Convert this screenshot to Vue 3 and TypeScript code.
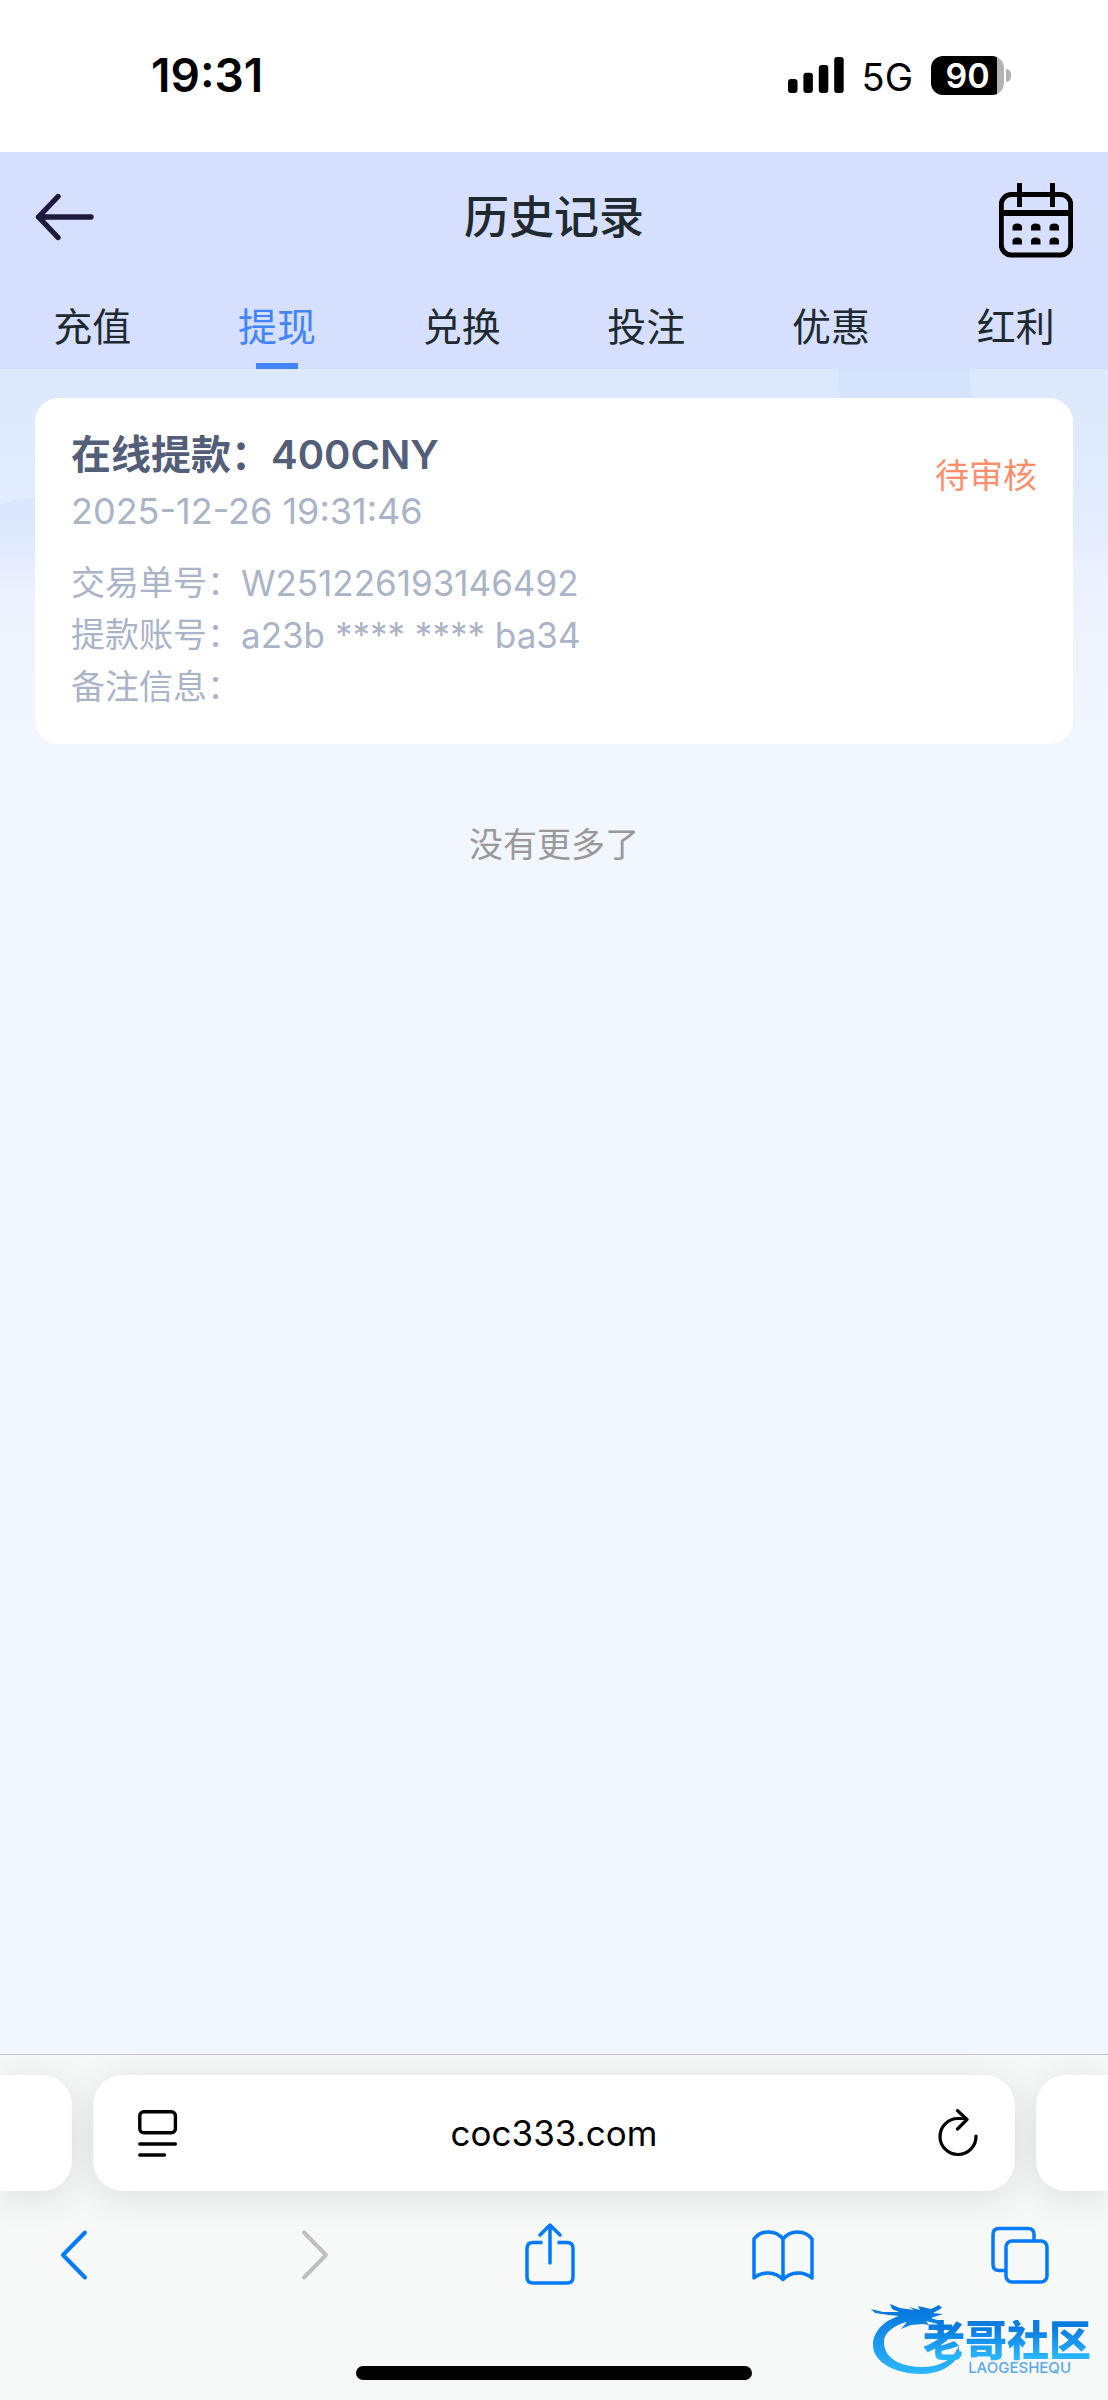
<script setup lang="ts">
import { ref } from 'vue'

interface Row {
  label: string
  value: string
}

const tabs: string[] = ['充值', '提现', '兑换', '投注', '优惠', '红利']
const active = ref<number>(1)
const address = ref<string>('coc333.com')
const rows: Row[] = [
  { label: '交易单号：', value: 'W251226193146492' },
  { label: '提款账号：', value: 'a23b **** **** ba34' },
  { label: '备注信息：', value: '' },
]
</script>

<template>
  <div class="screen">
    <div class="status">
      <span class="time">19:31</span>
      <div class="signals">
        <svg class="bars" width="56" height="36" viewBox="0 0 56 36" aria-hidden="true">
          <rect x="0" y="22" width="9.5" height="14" rx="3" />
          <rect x="15.4" y="15.7" width="9.5" height="20.3" rx="3" />
          <rect x="30.8" y="8" width="9.5" height="28" rx="3" />
          <rect x="46.2" y="0" width="9.5" height="36" rx="3" />
        </svg>
        <span class="net">5G</span>
        <div class="battery"><span class="level">90</span><i class="nub"></i></div>
      </div>
    </div>

    <header class="header">
      <div class="nav">
        <button class="icon-btn" type="button" aria-label="返回">
          <svg width="60" height="48" viewBox="0 0 60 48" fill="none" stroke="#1f1a3d" stroke-width="5.4" stroke-linecap="round" stroke-linejoin="round">
            <path d="M56 24H3.500M23 3.500L3.500 24L23 44.500" />
          </svg>
        </button>
        <h1 class="title">历史记录</h1>
        <button class="icon-btn cal" type="button" aria-label="选择日期">
          <svg width="74" height="75" viewBox="0 0 74 75" fill="none" stroke="#000">
            <rect x="2.300" y="11.500" width="69.400" height="60.500" rx="10" stroke-width="5" />
            <path d="M2 30H72" stroke-width="6" />
            <path d="M20.500 0V24M53.500 0V24" stroke-width="5" />
            <g fill="#000" stroke="none">
              <path v-for="x in [13.500, 32, 50.500]" :key="'a' + x" :d="`M${x} 47.500V44Q${x} 40.500 ${x + 4.700} 40.500Q${x + 9.500} 40.500 ${x + 9.500} 44V47.500Z`" />
              <path v-for="x in [13.500, 32, 50.500]" :key="'b' + x" :d="`M${x} 61.500V58Q${x} 54.500 ${x + 4.700} 54.500Q${x + 9.500} 54.500 ${x + 9.500} 58V61.500Z`" />
            </g>
          </svg>
        </button>
      </div>
      <nav class="tabs">
        <button v-for="(tab, i) in tabs" :key="tab" type="button" class="tab" :class="{ on: i === active }" @click="active = i">
          {{ tab }}
        </button>
      </nav>
    </header>

    <main class="content">
      <svg class="decor" viewBox="0 0 1108 400" preserveAspectRatio="none" aria-hidden="true">
        <defs>
          <linearGradient id="arc" x1="0" y1="0" x2="0" y2="1">
            <stop offset="0" stop-color="#dae6fd" />
            <stop offset="1" stop-color="#dae6fd" stop-opacity="0" />
          </linearGradient>
        </defs>
        <path d="M838 0H969Q970 16 974 40H842Q838 20 838 0Z" fill="#d6e3fd" />
        <path d="M0 136Q16 129 36 129H80V220H0Z" fill="url(#arc)" />
      </svg>
      <article class="card">
        <div class="top">
          <div>
            <h2 class="amount">在线提款：400CNY</h2>
            <time class="date">2025-12-26 19:31:46</time>
          </div>
          <span class="state">待审核</span>
        </div>
        <dl class="rows">
          <div v-for="row in rows" :key="row.label" class="row">
            <dt>{{ row.label }}</dt>
            <dd>{{ row.value }}</dd>
          </div>
        </dl>
      </article>
      <p class="end">没有更多了</p>
    </main>

    <footer class="browser">
      <div class="address">
        <div class="stub left"></div>
        <div class="field">
          <button class="icon-btn" type="button" aria-label="页面菜单">
            <svg width="40" height="48" viewBox="0 0 40 48" fill="none" stroke="#000" stroke-width="3.400" stroke-linecap="round">
              <rect x="1.800" y="2.800" width="35.600" height="21" rx="4" />
              <path d="M1.800 35H37.400M1.800 46H26.500" />
            </svg>
          </button>
          <input v-model="address" class="url" type="text" aria-label="网址" />
          <button class="icon-btn" type="button" aria-label="刷新">
            <svg width="40" height="48" viewBox="0 0 40 48" fill="none" stroke="#000" stroke-width="3.200" stroke-linecap="round" stroke-linejoin="round">
              <path d="M38 27A18 18 0 1 1 20 9.500H28" />
              <path d="M19.500 1.600L29 10.500L19.500 20" />
            </svg>
          </button>
        </div>
        <div class="stub right"></div>
      </div>

      <div class="tools">
        <button class="icon-btn" type="button" aria-label="后退">
          <svg width="28" height="64" viewBox="0 0 28 64" fill="none" stroke="#007aff" stroke-width="4" stroke-linecap="round" stroke-linejoin="round">
            <path d="M25 10.500L3 33L25 55.500" />
          </svg>
        </button>
        <button class="icon-btn fwd" type="button" aria-label="前进" disabled>
          <svg width="28" height="64" viewBox="0 0 28 64" fill="none" stroke="#bfbfbf" stroke-width="4" stroke-linecap="round" stroke-linejoin="round">
            <path d="M3 10.500L25 33L3 55.500" />
          </svg>
        </button>
        <button class="icon-btn" type="button" aria-label="分享">
          <svg width="50" height="64" viewBox="0 0 50 64" fill="none" stroke="#007aff" stroke-width="3.500" stroke-linecap="round" stroke-linejoin="round">
            <path stroke-linecap="butt" d="M17.500 20.500H8Q2 20.500 2 26.500V55Q2 61 8 61H42Q48 61 48 55V26.500Q48 20.500 42 20.500H32.500" />
            <path d="M25 41V3.500M15 13L25 3L35 13" />
          </svg>
        </button>
        <button class="icon-btn" type="button" aria-label="书签">
          <svg width="62" height="64" viewBox="0 0 62 64" fill="none" stroke="#007aff" stroke-width="3.500" stroke-linejoin="round">
            <path d="M31 17C24 7.500 9 7.500 2 17V56C10 49 23 49 31 57.500C39 49 52 49 60 56V17C53 7.500 38 7.500 31 17V57.500" />
          </svg>
        </button>
        <button class="icon-btn" type="button" aria-label="标签页">
          <svg width="58" height="64" viewBox="0 0 58 64" fill="none" stroke="#007aff" stroke-width="3.500">
            <rect x="15" y="19" width="41" height="41" rx="6" />
            <path d="M15 48.500H8Q2 48.500 2 42.500V12.500Q2 6.500 8 6.500H37Q43 6.500 43 12.500V19" />
          </svg>
        </button>
      </div>
      <div class="home"></div>

      <div class="mark">
        <svg class="dragon" width="90" height="76" viewBox="0 0 90 76" aria-hidden="true">
          <defs>
            <linearGradient id="ring" x1="0" y1="0" x2="0" y2="1">
              <stop offset="0.1" stop-color="#0877dd" />
              <stop offset="1" stop-color="#2cb8ff" />
            </linearGradient>
          </defs>
          <g fill="url(#ring)">
            <path d="M28 16C12 21 2 32 2 45C2 62 24 74 50 74C68 74 82 66 88 55L88 46C82 60 69 67 51 67C29 67 13 58 13 42C13 32 24 25 36 22L30 29L40 25L52 24L58 25L55 21L67 24L69 21L60 18L72 14L62 13L71 8L68 5L60 9L47 6L49 10L38 7L43 10L29 8L19 4L21 9L28 12L12 12L0 9L4 13L18 15Z" />
          </g>
        </svg>
        <div class="words">
          <span class="name">老哥社区</span>
          <span class="latin">LAOGESHEQU</span>
        </div>
      </div>
    </footer>
  </div>
</template>

<style>
body {
  margin: 0;
}
</style>

<style scoped>
.screen {
  display: flex;
  flex-direction: column;
  min-height: 100vh;
  background: #f2f6ff;
  font-family: Inter, "Noto Sans CJK SC", sans-serif;
  color: #1e2a30;
}
.status {
  display: flex;
  justify-content: space-between;
  align-items: center;
  box-sizing: border-box;
  height: 152px;
  padding: 0 104px 2px 151px;
  background: #fff;
  color: #000;
}
.time {
  font-size: 46px;
  font-weight: 600;
}
.signals {
  display: flex;
  align-items: center;
  gap: 18px;
}
.net {
  font-size: 38px;
  line-height: 40px;
  padding-top: 4px;
}
.battery {
  position: relative;
  box-sizing: border-box;
  width: 73px;
  height: 39px;
  border-radius: 12px;
  background: linear-gradient(to right, #000 66px, #b3b3b3 66px);
  color: #fff;
  font-size: 34px;
  font-weight: 600;
  line-height: 39px;
  text-align: center;
}
.nub {
  position: absolute;
  right: -7px;
  top: 13px;
  width: 5px;
  height: 13px;
  border-radius: 0 6px 6px 0;
  background: #b3b3b3;
}
.header {
  background: #d7dfff;
}
.nav {
  display: flex;
  justify-content: space-between;
  align-items: center;
  height: 130px;
  padding: 0 35px;
}
.icon-btn {
  display: flex;
  padding: 0;
  border: 0;
  background: none;
}
.nav .icon-btn {
  width: 74px;
}
.nav .cal {
  padding-top: 6px;
}
.title {
  margin: 0;
  padding-bottom: 6px;
  font-size: 45px;
  font-weight: 500;
}
.tabs {
  display: flex;
}
.tab {
  position: relative;
  flex: 1;
  height: 87px;
  padding: 2px 0 0;
  border: 0;
  background: none;
  color: inherit;
  font-family: inherit;
  font-size: 39px;
  line-height: 85px;
}
.tab.on {
  color: #4285fb;
}
.tab.on::after {
  content: "";
  position: absolute;
  left: 50%;
  bottom: 0;
  width: 42px;
  height: 6px;
  margin-left: -21px;
  background: #4285fb;
}
.content {
  position: relative;
  flex: 1;
  padding: 29px 35px 0;
  background: linear-gradient(#dce8fc 0, #e2ecfe 140px, #edf2fe 230px, #f2f6ff 360px);
}
.decor {
  position: absolute;
  left: 0;
  top: 0;
  width: 100%;
  height: 400px;
}
.card {
  position: relative;
  padding: 28px 36px 31px;
  border-radius: 24px;
  background: #fff;
}
.top {
  display: flex;
  justify-content: space-between;
  align-items: center;
  margin-bottom: 18px;
}
.amount {
  margin: 0;
  color: #535e79;
  font-size: 40px;
  font-weight: 600;
  line-height: 57px;
}
.date,
.rows {
  display: block;
  margin: 0;
  color: #a9b4c8;
  font-size: 34px;
  line-height: 56px;
}
.date {
  font-size: 36px;
}
.state {
  color: #ff8e6b;
  font-size: 34px;
  line-height: 50px;
  padding-bottom: 14px;
}
.row {
  display: flex;
  line-height: 52px;
}
.row dd {
  margin: 0;
  font-size: 35px;
}
.end {
  margin: 76px 0 0;
  color: #999;
  font-size: 34px;
  line-height: 50px;
  text-align: center;
}
.browser {
  position: relative;
  border-top: 1px solid #c0c3c6;
  background: #f7f8f8;
  overflow: hidden;
}
.address {
  display: flex;
  gap: 21px;
  padding-top: 20px;
}
.stub,
.field {
  height: 116px;
  background: #fff;
  box-shadow: 0 6px 36px rgba(0, 0, 0, 0.11);
}
.stub {
  width: 72px;
}
.left {
  border-radius: 0 30px 30px 0;
}
.right {
  border-radius: 30px 0 0 30px;
}
.field {
  display: flex;
  flex: 1;
  align-items: center;
  box-sizing: border-box;
  min-width: 0;
  padding: 0 37px 0 45px;
  border-radius: 30px;
}
.url {
  flex: 1;
  min-width: 0;
  padding: 0 8px 0 0;
  border: 0;
  outline: 0;
  background: none;
  color: #000;
  font-family: inherit;
  font-size: 35px;
  text-align: center;
}
.tools {
  display: flex;
  justify-content: space-between;
  padding: 31px 59px 0 60px;
}
.tools .fwd {
  padding: 0 18px 0 36px;
}
.home {
  width: 396px;
  height: 14px;
  margin: 80px auto 20px;
  border-radius: 7px;
  background: #000;
}
.mark {
  position: absolute;
  right: 17px;
  bottom: 24px;
  display: flex;
}
.dragon {
  margin-right: -38px;
}
.words {
  position: relative;
  display: flex;
  flex-direction: column;
  align-items: flex-end;
  padding-top: 20px;
}
.name {
  background: linear-gradient(#0a7be0 20%, #2ab6ff 90%);
  background-clip: text;
  color: transparent;
  font-size: 42px;
  font-weight: 900;
  line-height: 42px;
}
.latin {
  padding-right: 20px;
  color: #59a9ea;
  font-size: 15px;
  font-weight: 500;
  line-height: 12px;
}
</style>
